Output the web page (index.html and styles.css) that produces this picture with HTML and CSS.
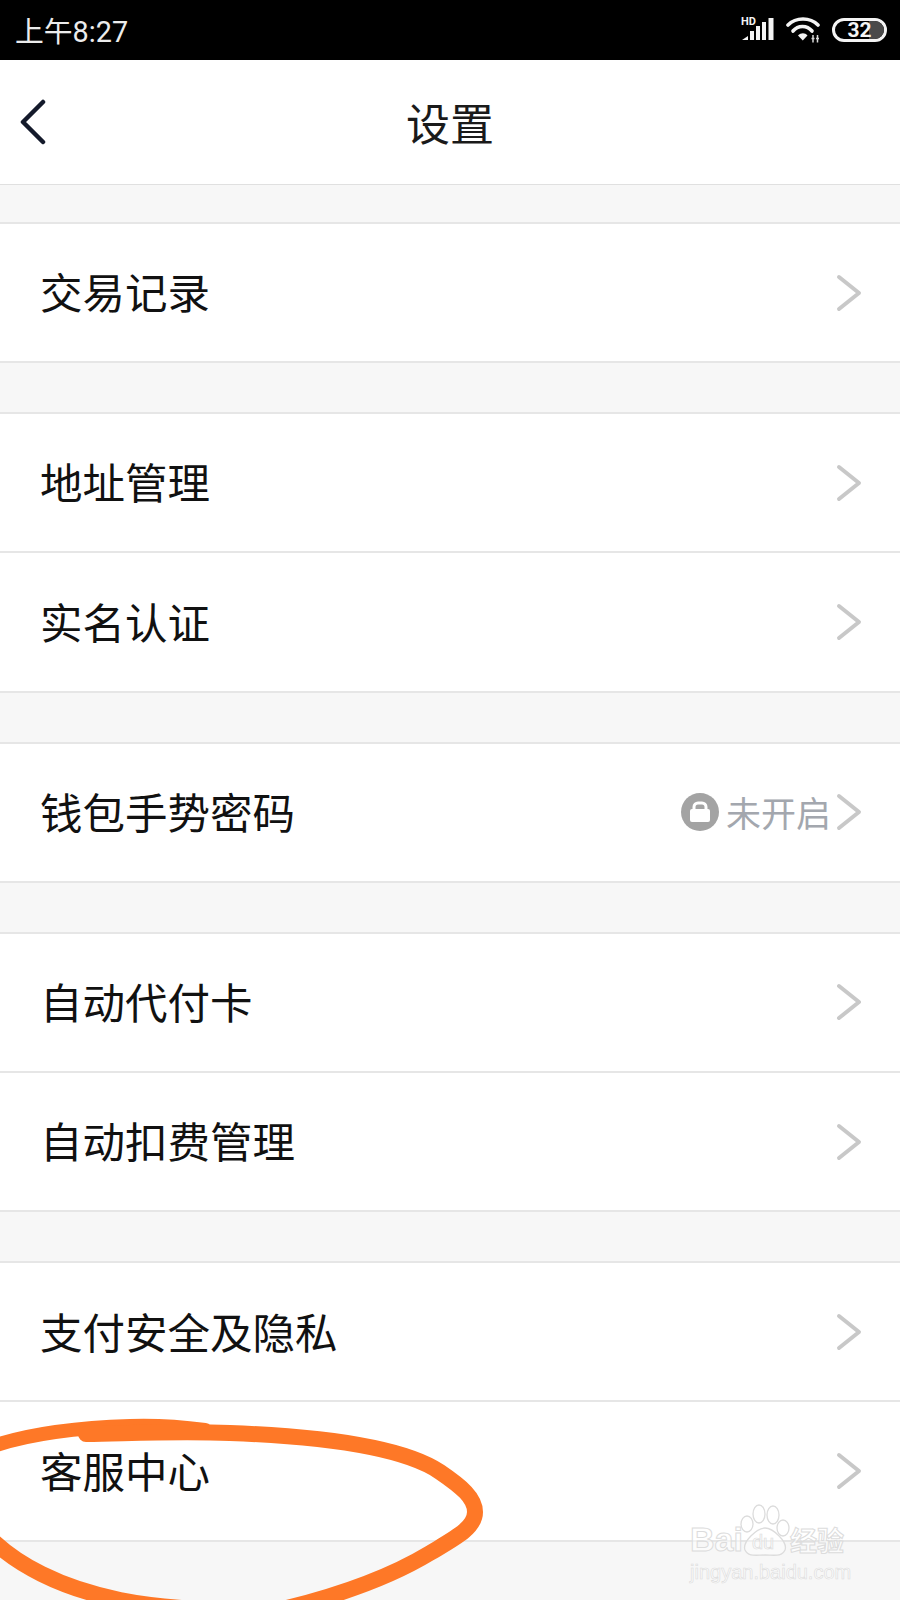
FILE: index.html
```html
<!DOCTYPE html>
<html lang="zh-CN">
<head>
<meta charset="utf-8">
<title>设置</title>
<link rel="stylesheet" href="styles.css">
</head>
<body>
<div class="phone">
  <div class="statusbar">
    <span class="clock">上午8:27</span>
    <div class="status-icons">
      <div class="signal">
        <span class="hd">HD</span>
        <svg width="32" height="23" viewBox="0 0 32 23"><g fill="#f4f4f4"><path d="M0 22l6-4v4z"/><rect x="8" y="13" width="4" height="9"/><rect x="14" y="8" width="4" height="14"/><rect x="20" y="4" width="4" height="18"/><rect x="26.500" y="0" width="5" height="22"/></g></svg>
      </div>
      <svg class="wifi" width="34" height="26" viewBox="0 0 34 26"><g fill="none" stroke="#f4f4f4" stroke-width="3.600" stroke-linecap="round"><path d="M2 8C10 0 24 0 32 8"/><path d="M7 14C12 8 21 8 26 14"/></g><path d="M12 18.500C15 15.500 19 15.500 21.500 18.500L16.800 23.500z" fill="#f4f4f4"/><path d="M27 18v7.500M31.500 18v7.500M25.500 21.500h3M30 21.500h3" stroke="#d8d8d8" stroke-width="1.500"/></svg>
      <div class="battery"><span class="battery-fill"></span><span class="battery-num">32</span></div>
    </div>
  </div>

  <header class="navbar">
    <svg class="back" width="28" height="46" viewBox="0 0 28 46"><path d="M24 3L4 23l20 20" fill="none" stroke="#141a2b" stroke-width="4.500" stroke-linecap="round" stroke-linejoin="round"/></svg>
    <h1 class="title">设置</h1>
  </header>

  <main class="content">
    <section class="group first">
      <a class="row"><span class="label">交易记录</span><svg class="chev" width="26" height="38" viewBox="0 0 26 38"><path d="M3 3l20 16L3 35" /></svg></a>
    </section>
    <section class="group">
      <a class="row"><span class="label">地址管理</span><svg class="chev" width="26" height="38" viewBox="0 0 26 38"><path d="M3 3l20 16L3 35" /></svg></a>
      <a class="row"><span class="label">实名认证</span><svg class="chev" width="26" height="38" viewBox="0 0 26 38"><path d="M3 3l20 16L3 35" /></svg></a>
    </section>
    <section class="group">
      <a class="row"><span class="label">钱包手势密码</span>
        <span class="extra">
          <svg class="lock" width="38" height="38" viewBox="0 0 38 38"><circle cx="19" cy="19" r="19" fill="#a3a3a3"/><rect x="9" y="16" width="20" height="13" rx="2" fill="#fff"/><path d="M13 17v-3a4 4 0 0 1 4-4h4a4 4 0 0 1 4 4v3" fill="none" stroke="#fff" stroke-width="3"/></svg>
          <span class="extra-text">未开启</span>
        </span>
        <svg class="chev" width="26" height="38" viewBox="0 0 26 38"><path d="M3 3l20 16L3 35" /></svg></a>
    </section>
    <section class="group">
      <a class="row"><span class="label">自动代付卡</span><svg class="chev" width="26" height="38" viewBox="0 0 26 38"><path d="M3 3l20 16L3 35" /></svg></a>
      <a class="row"><span class="label">自动扣费管理</span><svg class="chev" width="26" height="38" viewBox="0 0 26 38"><path d="M3 3l20 16L3 35" /></svg></a>
    </section>
    <section class="group">
      <a class="row"><span class="label">支付安全及隐私</span><svg class="chev" width="26" height="38" viewBox="0 0 26 38"><path d="M3 3l20 16L3 35" /></svg></a>
      <a class="row"><span class="label">客服中心</span><svg class="chev" width="26" height="38" viewBox="0 0 26 38"><path d="M3 3l20 16L3 35" /></svg></a>
    </section>
  </main>

  <svg class="scribble" width="900" height="220" viewBox="0 1380 900 220"><g fill="none" stroke="#fe7827" stroke-linecap="round"><path d="M-12 1448C20 1436 70 1428 130 1426C160 1425 190 1428 205 1430" stroke-width="14"/><path d="M86 1434C140 1433 180 1431 230 1433C310 1436 400 1445 440 1472C462 1487 475 1498 475 1512C475 1528 455 1538 430 1553C392 1576 340 1596 270 1612" stroke-width="16"/><path d="M-12 1536C15 1564 60 1588 120 1600C150 1606 200 1612 300 1612" stroke-width="16"/></g></svg>

  <div class="watermark">
    <div class="wm-top">
      <span class="wm-bai">Bai</span>
      <div class="paw-box">
        <svg class="paw" width="50" height="54" viewBox="0 0 50 54"><g fill="#fff" fill-opacity=".35" stroke="#dcdcdc" stroke-width="1.300"><ellipse cx="7" cy="20" rx="6" ry="8"/><ellipse cx="19" cy="10" rx="6" ry="9"/><ellipse cx="33" cy="11" rx="6" ry="9"/><ellipse cx="43" cy="24" rx="6" ry="8"/><path d="M25 24C33 24 48 38 45 46C42 53 34 51 25 51C16 51 8 53 5 46C2 38 17 24 25 24z"/></g></svg>
        <span class="wm-du">du</span>
      </div>
      <span class="wm-cn">经验</span>
    </div>
    <div class="wm-url">jingyan.baidu.com</div>
  </div>
</div>
</body>
</html>
```

FILE: styles.css
```css
* { box-sizing: border-box; }
html, body { margin: 0; padding: 0; }
body { width: 900px; height: 1600px; overflow: hidden; background: #f7f7f7; font-family: "Liberation Sans", "Noto Sans CJK SC", sans-serif; }
.phone { position: relative; width: 900px; height: 1600px; overflow: hidden; background: #f7f7f7; }

.statusbar { height: 60px; background: #000; color: #ececec; display: flex; align-items: center; justify-content: space-between; padding: 0 13px 0 15px; }
.clock { font-family: "Roboto", "Noto Sans CJK SC", sans-serif; font-size: 28.800px; line-height: 60px; padding-top: 3px; }
.status-icons { display: flex; align-items: center; gap: 12px; padding-bottom: 1px; }
.signal { position: relative; width: 32px; height: 24px; }
.signal svg { position: absolute; left: 0; top: 0; display: block; }
.hd { position: absolute; left: -1px; top: -2px; font-family: "Roboto", sans-serif; font-weight: 700; font-size: 11px; line-height: 12px; color: #f4f4f4; }
.wifi { display: block; }
.battery { position: relative; width: 55px; height: 24px; border: 3px solid #f4f4f4; border-radius: 13px; display: flex; align-items: center; justify-content: center; overflow: hidden; }
.battery-fill { position: absolute; right: 0; top: 0; bottom: 0; width: 15px; background: #4a4a4a; }
.battery-num { position: relative; font-family: "Roboto", sans-serif; font-weight: 700; font-size: 21px; line-height: 20px; color: #f5f5f5; }

.navbar { position: relative; height: 125px; background: #fff; border-bottom: 1px solid #e0e0e0; display: flex; align-items: center; justify-content: center; }
.back { position: absolute; left: 19px; top: 39px; }
.title { margin: 0; font-size: 44px; font-weight: 400; color: #1a1a1a; font-family: "Noto Sans CJK SC", sans-serif; line-height: 1; }

.content { display: flex; flex-direction: column; gap: 49px; }
.group { background: #fff; border-top: 2px solid #e6e6e6; border-bottom: 2px solid #e6e6e6; display: flex; flex-direction: column; }
.group.first { margin-top: 37px; }
.row { height: 137px; display: flex; align-items: center; padding: 0 38px 0 40px; color: #111; text-decoration: none; }
.row + .row { border-top: 2px solid #e6e6e6; height: 139.700px; }
.label { flex: 1; font-family: "Noto Sans CJK SC", sans-serif; font-size: 42.500px; line-height: 1; padding-bottom: 2px; }
.chev { display: block; fill: none; stroke: #c8c8c8; stroke-width: 4; stroke-linecap: round; stroke-linejoin: round; }
.extra { display: flex; align-items: center; gap: 7px; margin-right: 5px; }
.extra-text { font-family: "Noto Sans CJK SC", sans-serif; font-size: 35px; color: #a3a7ae; line-height: 1; padding-bottom: 2px; }
.lock { display: block; }

.scribble { position: absolute; left: 0; top: 1380px; display: block; }

.watermark { position: absolute; left: 690px; top: 1500px; width: 170px; }
.wm-top { display: flex; align-items: flex-end; height: 58px; }
.wm-bai, .wm-cn, .wm-url, .wm-du { -webkit-text-stroke: 1px #dcdcdc; color: rgba(255,255,255,.5); }
.wm-bai { font-family: "Liberation Sans", sans-serif; font-weight: 700; font-size: 34px; line-height: 38px; }
.paw-box { position: relative; width: 50px; height: 54px; margin-left: -3px; }
.paw { display: block; }
.wm-du { position: absolute; left: 12px; top: 28px; font-family: "Liberation Sans", sans-serif; font-size: 20px; line-height: 20px; -webkit-text-stroke-width: .7px; }
.wm-cn { font-family: "Noto Sans CJK SC", sans-serif; font-size: 27px; font-weight: 700; line-height: 36px; }
.wm-url { font-family: "Liberation Sans", sans-serif; font-size: 20px; line-height: 24px; margin-top: 2px; -webkit-text-stroke-width: .6px; }
```
